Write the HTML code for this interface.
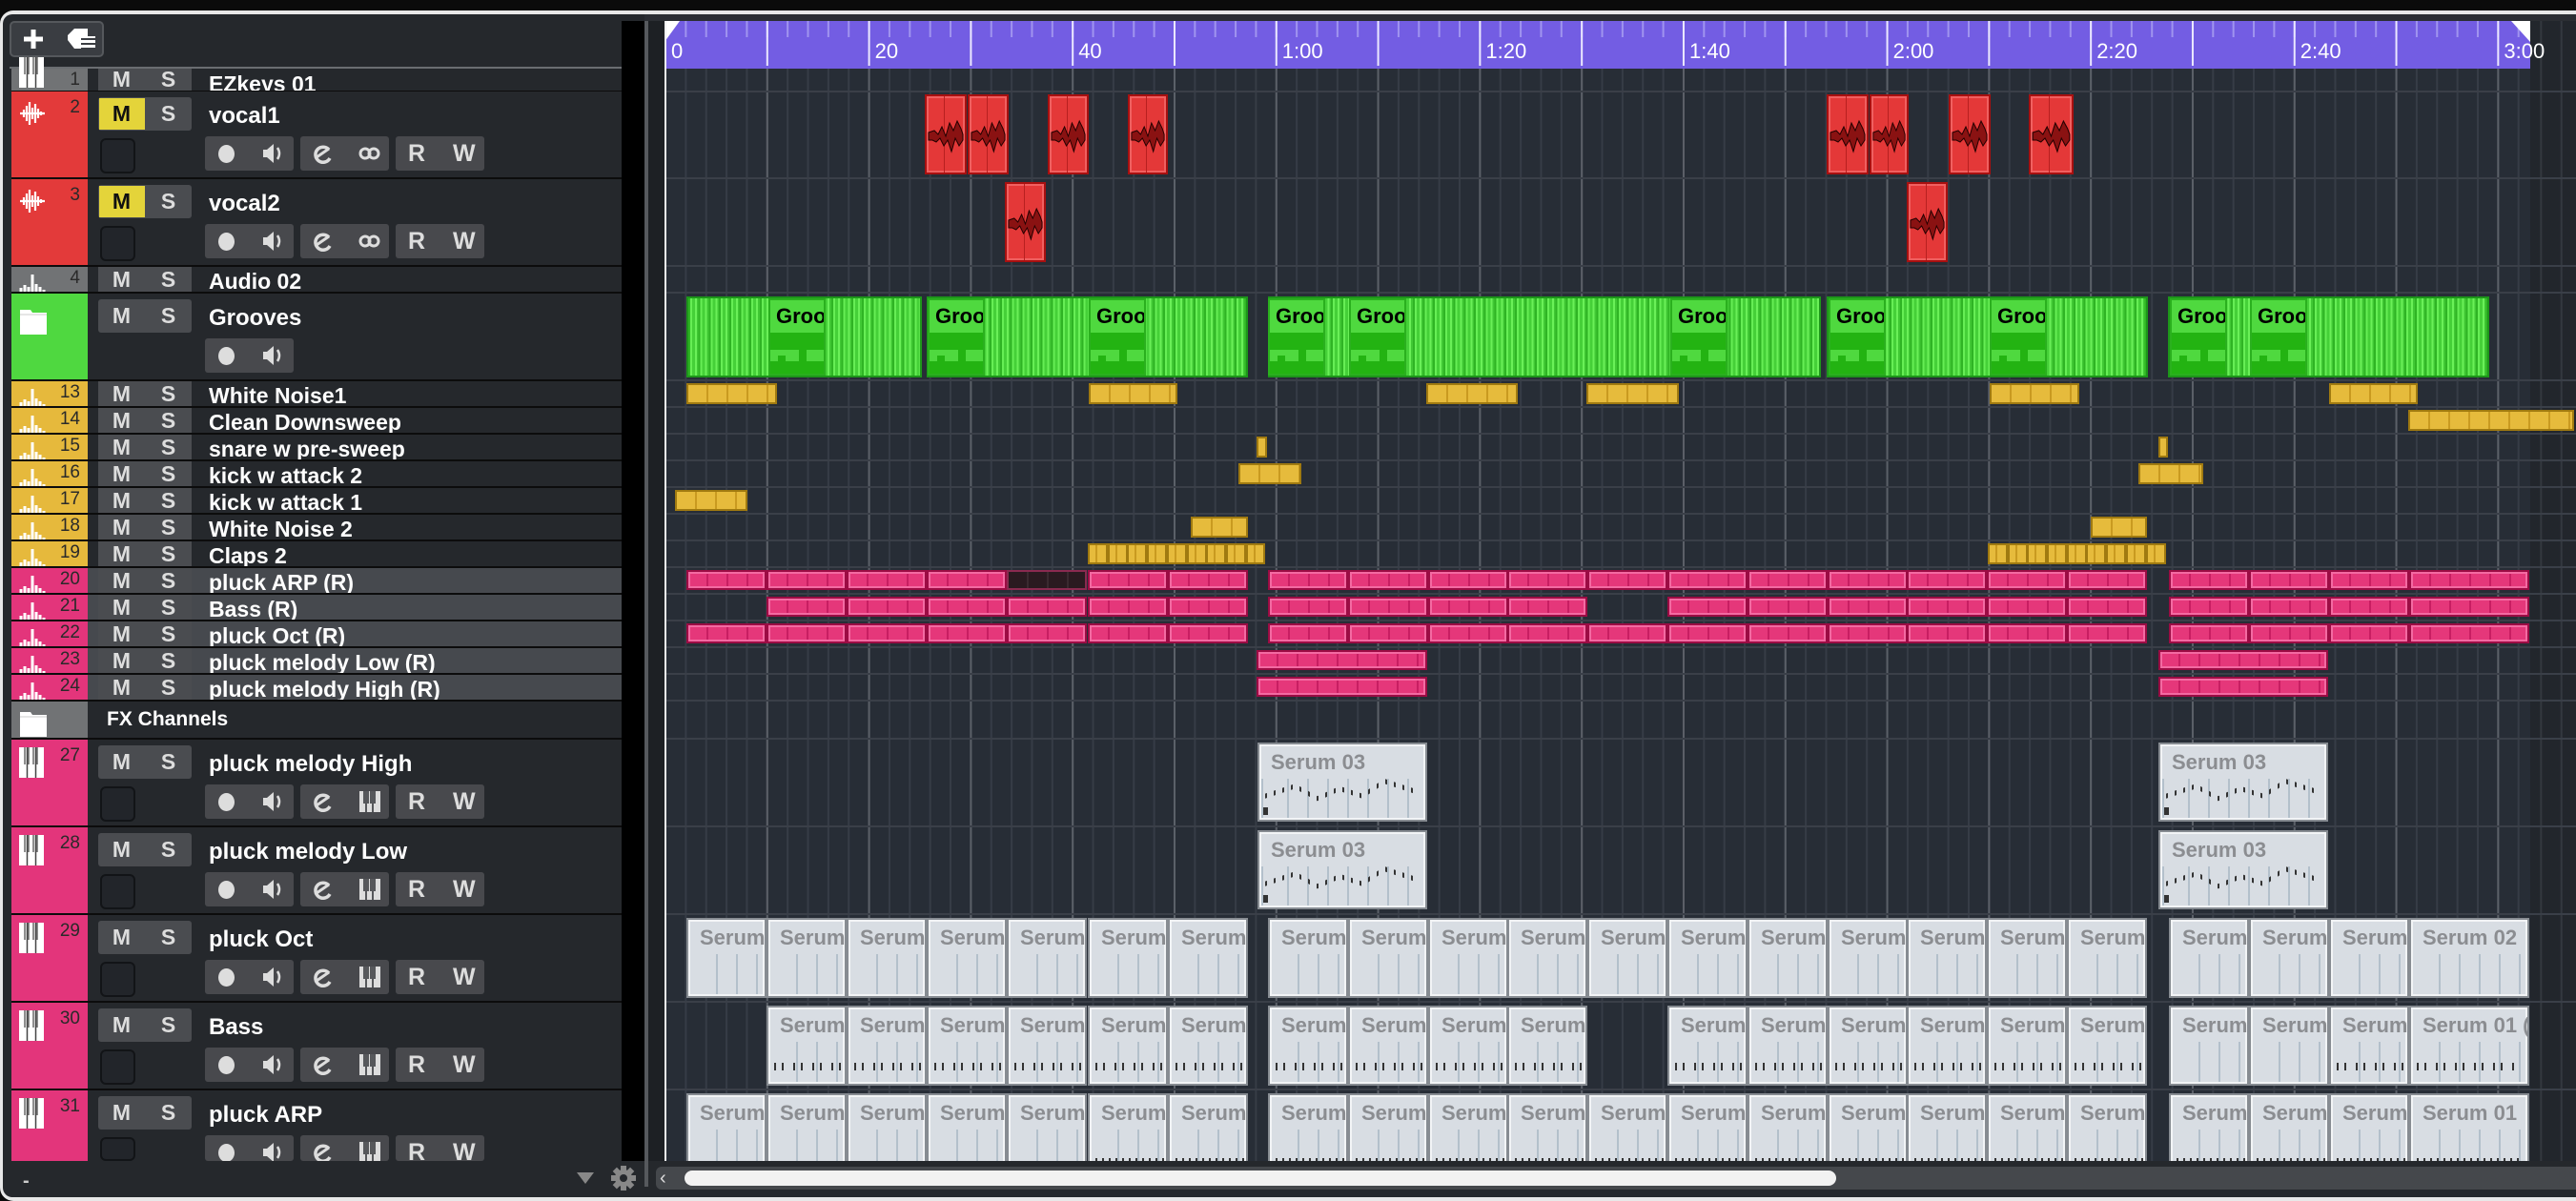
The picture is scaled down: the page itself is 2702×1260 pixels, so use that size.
<!DOCTYPE html>
<html><head><meta charset="utf-8"><style>
body{margin:0;width:2702px;height:1260px;overflow:hidden;background:#0b0b0b;position:relative;font-family:"Liberation Sans",sans-serif}
div{box-sizing:border-box}
</style></head><body>
<script>
const B=document.body;
function d(x,y,w,h,st,html){const e=document.createElement('div');e.style.cssText=`position:absolute;left:${x}px;top:${y}px;width:${w}px;height:${h}px;`+(st||'');if(html!==undefined)e.innerHTML=html;B.appendChild(e);return e;}
// frame
d(0,11,2702,1249,'background:#e8e8e8;border-radius:14px 0 0 14px');
d(3,15,2699,1241,'background:#25282c;border-radius:10px 0 0 10px');
d(676,15,2026,7,'background:#2b2e33');
// toolbar button
d(10,22,99,38,'background:#3a3d42;border:2px solid #55585c;border-radius:5px');
d(23,24,24,34,'','<svg width="24" height="34"><path d="M12 7v20M2 17h20" stroke="#fff" stroke-width="5"/></svg>');
d(68,28,36,26,'','<svg width="36" height="26"><path d="M10 2h14v8h8v13H10L3 14V9z" fill="#fff"/><path d="M17 13h15M17 18h15M17 23h15" stroke="#3a3d42" stroke-width="2"/></svg>');
d(10,70,642,2,'background:#6a6d71');
// left panel black bg
d(12,72,640,1146,'background:#0c0c0c');
d(652,22,24,1196,'background:#000');
d(676,22,4,1223,'background:#56595d');
d(680,22,17,1196,'background:#1d2024');
const IC={
wave:'<svg width="30" height="30"><path d="M2 15h26M6 11v8M9 7v16M12 3v24M15 9v12M18 5v20M21 10v10M24 13v4" stroke="#fff" stroke-width="2.2"/></svg>',
bars:'<svg width="30" height="20"><path d="M3 20v-4M7 20v-7M11 20v-5M15 20V2M19 20v-8M23 20v-5M27 20v-2" stroke="#fff" stroke-width="3"/></svg>',
keys:'<svg width="26" height="32"><rect x="0" y="0" width="26" height="32" fill="#fff"/><path d="M8.5 0v32M17.5 0v32" stroke="#444" stroke-width="1.5"/><path d="M6 0v18M10 0v18M15 0v18M19 0v18" stroke="#444" stroke-width="1.2"/></svg>',
folder:'<svg width="30" height="30"><path d="M1 3h11l2 3h15v23H1z" fill="#fff"/><path d="M1 8h28" stroke="#ccc" stroke-width="1"/></svg>'};
const SPK='<svg width="26" height="26"><path d="M3 9h4l7-6v20l-7-6H3z" fill="#ddd"/><path d="M18 7q4 6 0 12" stroke="#ddd" stroke-width="2.5" fill="none"/></svg>';
const EDT='<svg width="26" height="26"><path d="M20 9a8 8 0 1 0 1 9" stroke="#ddd" stroke-width="3.5" fill="none"/><path d="M7 17L20 8" stroke="#ddd" stroke-width="3"/></svg>';
const LNK='<svg width="26" height="26"><circle cx="8" cy="13" r="5" stroke="#ddd" stroke-width="3" fill="none"/><circle cx="17" cy="13" r="5" stroke="#ddd" stroke-width="3" fill="none"/></svg>';
const KEY='<svg width="26" height="26"><rect x="2" y="2" width="22" height="22" fill="#ddd"/><path d="M9 2v22M16 2v22M7 2v13M11 2v13M14 2v13M18 2v13" stroke="#48494d" stroke-width="1.8"/></svg>';
function row(y,h,col,num,name,kind,icon,o){o=o||{};
 d(12,y,640,h,'background:'+(o.bg||'#25282c'));
 d(12,y,80,h,'background:'+col);
 if(num)d(36,y+(kind=='b'?6:1),48,22,'text-align:right;color:#2a2a2a;font-size:19px;line-height:22px',num);
 if(icon=='wave')d(19,y+8,30,30,'',IC.wave);
 if(icon=='bars')d(19,y+h-20,30,20,'',IC.bars);
 if(icon=='keys')d(20,y+(kind=='b'?8:-12),26,kind=='b'?32:35,'overflow:hidden',IC.keys);
 if(icon=='folder')d(20,y+(kind=='fx'?8:14),30,30,'',IC.folder);
 if(kind=='fx'){d(112,y,400,h,'color:#fff;font-weight:bold;font-size:21px;line-height:'+h+'px','FX Channels');return;}
 let my=kind=='b'?y+6:y, mh=kind=='b'?35:h;
 d(103,my,98,mh,'background:#4a4c50;border-radius:'+(kind=='b'?'3px':'0'));
 if(o.m)d(104,my+1,48,mh-2,'background:#e4d43a');
 d(103,my,49,mh,'text-align:center;font-weight:bold;font-size:23px;line-height:'+mh+'px;color:'+(o.m?'#111':'#ddd'),'M');
 d(152,my,49,mh,'text-align:center;font-weight:bold;font-size:23px;line-height:'+mh+'px;color:#ddd','S');
 if(kind=='b'){
  d(219,y+8,420,35,'color:#fff;font-weight:bold;font-size:24px;line-height:35px',name);
  if(!o.g1only)d(105,y+49,37,Math.min(37,h-49),'border:2px solid #121417;border-radius:6px;background:#22252a');
  const by=y+47,bh=Math.min(36,h-47);
  const g=(x,html)=>{d(x,by,93,bh,'background:#48494d;border-radius:3px;overflow:hidden',html)};
  g(215,'<div style="position:absolute;left:14px;top:9px;width:17px;height:19px;border-radius:50%;background:#ddd"></div><div style="position:absolute;left:58px;top:5px">'+SPK+'</div>');
  if(!o.g1only){
   g(315,'<div style="position:absolute;left:10px;top:5px">'+EDT+'</div><div style="position:absolute;left:60px;top:5px">'+(o.g2=='link'?LNK:KEY)+'</div>');
   g(415,'<div style="position:absolute;left:13px;top:0;font-weight:bold;font-size:25px;line-height:36px;color:#ddd">R</div><div style="position:absolute;left:60px;top:0;font-weight:bold;font-size:25px;line-height:36px;color:#ddd">W</div>');
  }
 } else {
  d(219,y,420,h,'color:#fff;font-weight:bold;font-size:23px;overflow:hidden;line-height:'+(h+(h<25?10:4))+'px',name);
 }
}
const GR='#717375',RD='#e33a3a',GN='#4fd840',YL='#e6b93c',PK='#e3357b';
row(72,23,GR,'1','EZkeys 01','s','keys');
row(96,90,RD,'2','vocal1','b','wave',{m:1,g2:'link'});
row(188,90,RD,'3','vocal2','b','wave',{m:1,g2:'link'});
row(280,26,GR,'4','Audio 02','s','bars');
row(308,90,GN,'','Grooves','b','folder',{g1only:1});
const yn=['White Noise1','Clean Downsweep','snare w pre-sweep','kick w attack 2','kick w attack 1','White Noise 2','Claps 2'];
yn.forEach((n,i)=>row(400+28*i,26,YL,String(13+i),n,'s','bars'));
const pn=['pluck ARP (R)','Bass (R)','pluck Oct (R)','pluck melody Low (R)','pluck melody High (R)'];
pn.forEach((n,i)=>row(596+28*i,26,PK,String(20+i),n,'s','bars',{bg:'#46494e'}));
row(736,38,GR,'','FX Channels','fx','folder');
const kn=['pluck melody High','pluck melody Low','pluck Oct','Bass','pluck ARP'];
kn.forEach((n,i)=>row(776+92*i,i==4?74:90,PK,String(27+i),n,'b','keys',{g2:'keys'}));
d(12,1218,640,38,'background:#25282c');
d(24,1228,20,20,'color:#ccc;font-size:20px;font-weight:bold','-');
d(603,1228,22,20,'','<svg width="22" height="16"><path d="M2 2h18L11 14z" fill="#888"/></svg>');
d(640,1222,28,28,'','<svg width="28" height="28"><g fill="#888"><circle cx="14" cy="14" r="9"/><rect x="11" y="1" width="6" height="26"/><rect x="1" y="11" width="26" height="6"/><rect x="11" y="1" width="6" height="26" transform="rotate(45 14 14)"/><rect x="11" y="1" width="6" height="26" transform="rotate(-45 14 14)"/></g><circle cx="14" cy="14" r="4" fill="#25282c"/></svg>');
// track area
const X0=697;
d(697,72,1957,1146,'background-color:#272d36;background-image:linear-gradient(90deg,#5b6068 0 2px,transparent 2px),linear-gradient(90deg,#363c46 0 2px,transparent 2px);background-size:106.8px 100%,21.36px 100%');
d(2654,22,48,1196,'background-color:#22262c;background-image:linear-gradient(90deg,#33383f 0 2px,transparent 2px);background-size:21.36px 100%;background-position:-11px 0');
const rb=[95,186,278,306,398];for(let i=0;i<12;i++)rb.push(426+28*i);rb.push(774);for(let i=0;i<5;i++)rb.push(866+92*i);
rb.forEach(y=>d(697,y,2005,2,'background:#3a3f48'));
d(697,22,1957,50,'background-color:#735de3;background-image:linear-gradient(90deg,#ebe8ff 0 2px,transparent 2px),linear-gradient(90deg,#a094ef 0 2px,transparent 2px);background-size:106.8px 47px,21.36px 17px;background-repeat:repeat-x');
['0','20','40','1:00','1:20','1:40','2:00','2:20','2:40','3:00'].forEach((l,i)=>d(X0+i*213.6+7,22,80,50,'color:#fff;font-size:22px;line-height:64px',l));
d(697,22,16,22,'','<svg width="16" height="22"><path d="M0 0h16L0 22z" fill="#fff"/></svg>');
d(2634,22,20,22,'','<svg width="20" height="22"><path d="M0 0h20v22z" fill="#fff"/></svg>');
function clip(x1,x2,y1,y2,st,html){return d(Math.round(x1),y1,Math.round(x2-x1),y2-y1,st,html);}
const WV='<svg width="100%" height="40" viewBox="0 0 40 40" preserveAspectRatio="none" style="position:absolute;left:0;top:22px"><path d="M2 16 L8 14 12 18 16 10 20 20 24 6 28 14 32 4 36 12 38 18 38 24 34 30 30 22 26 36 22 24 18 30 14 22 10 26 6 24 2 24z" fill="#8a1212" stroke="#200" stroke-width="1"/></svg>';
function red(x1,x2,y){clip(x1,x2,y,y+84,'background:#e43838;border:2px solid #a81010;box-shadow:inset 0 0 0 2px #f06060;overflow:hidden','<div style="position:absolute;left:45%;top:0;width:1px;height:100%;background:#b82020"></div>'+WV);}
[[970,1014],[1015,1058],[1099,1142],[1183,1225],[1916,1960],[1961,2002],[2044,2088],[2128,2175]].forEach(a=>red(a[0],a[1],99));
[[1054,1097],[2000,2043]].forEach(a=>red(a[0],a[1],191));
function groove(x1,x2){clip(x1,x2,311,396,'background-color:#50dc42;border:2px solid #1d961a;background-image:repeating-linear-gradient(90deg,#2fb424 0 2px,#66ee55 2px 4px,#45d038 4px 7px,#6af058 7px 9px,#40c834 9px 10.7px);');}
[[720,967],[972,1309],[1330,1910],[1916,2253],[2274,2611]].forEach(a=>groove(a[0],a[1]));
[806,973,1142,1330,1415,1752,1918,2087,2276,2360].forEach(x=>d(x,313,60,81,'background:#4fd93f;border:2px solid #2ab01e;overflow:hidden','<div style="position:absolute;left:0;top:34px;width:100%;height:18px;background:#23b312"></div><div style="position:absolute;left:0;top:64px;width:100%;height:14px;background:#23b312"></div><div style="position:absolute;left:8px;top:58px;width:8px;height:8px;background:#23b312"></div><div style="position:absolute;left:30px;top:52px;width:8px;height:12px;background:#23b312"></div><div style="position:absolute;left:6px;top:4px;color:#000;font-weight:bold;font-size:22px">Groo</div>'));
function yel(x1,x2,r,seg){const y=400+28*r;
 if(seg){for(let x=x1;x<x2-2;x+=20.7)clip(x,Math.min(x+20.7,x2),y+2,y+24,'background:#e6bb3c;border:2px solid #a07a10;background-image:linear-gradient(90deg,transparent 6px,#c99a20 6px 8px,transparent 8px)');return;}
 clip(x1,x2,y+2,y+24,'background-color:#e6bb3c;border:2px solid #a07a10;background-image:repeating-linear-gradient(90deg,transparent 0 19px,#c99a20 19px 21px)');}
[[720,815],[1142,1235],[1496,1592],[1664,1761],[2087,2181],[2443,2536]].forEach(a=>yel(a[0],a[1],0));
yel(2526,2700,1);
yel(1318,1329,2);yel(2264,2274,2);
yel(1299,1365,3);yel(2243,2311,3);
yel(708,784,4);
yel(1249,1309,5);yel(2193,2252,5);
yel(1141,1327,6,1);yel(2085,2273,6,1);
const A=[],Bs=[],C=[];
for(let i=0;i<7;i++)A.push([720+84.1*i,720+84.1*(i+1)]);
for(let j=0;j<11;j++)Bs.push([1330+83.8*j,1330+83.8*(j+1)]);
C.push([2275,2359],[2359,2443],[2443,2527],[2527,2653]);
function pink(a,y,dark){clip(a[0],a[1],y+2,y+23,(dark?'background-color:#2a1a20;border:2px solid #8a2a50;':'background-color:#e5377a;border:2px solid #9c0c44;box-shadow:inset 0 0 0 2px #f36aa2;')+'background-image:repeating-linear-gradient(90deg,transparent 0 19px,'+(dark?'#3a2a30':'#c81e62')+' 19px 21px)');}
[0,2].forEach(r=>{const y=596+28*r;A.forEach((a,i)=>pink(a,y,r==0&&i==4));Bs.forEach(a=>pink(a,y));C.forEach(a=>pink(a,y));});
{const y=624;A.slice(1).forEach(a=>pink(a,y));Bs.slice(0,4).forEach(a=>pink(a,y));Bs.slice(5).forEach(a=>pink(a,y));C.forEach(a=>pink(a,y));}
[680,708].forEach(y=>{pink([1318,1497],y);pink([2264,2442],y);});
function notes(kind){
 if(kind=='mel')return '<div style="position:absolute;left:6px;top:36px;width:90%;height:26px;background-image:repeating-linear-gradient(90deg,#333 0 2px,transparent 2px 9px);clip-path:polygon(0 60%,20% 20%,35% 70%,50% 30%,65% 60%,80% 0,100% 40%,100% 60%,80% 20%,65% 80%,50% 50%,35% 90%,20% 40%,0 80%)"></div><div style="position:absolute;left:4px;top:66px;width:5px;height:8px;background:#333"></div>';
 if(kind=='bass')return '<div style="position:absolute;left:6px;top:58px;width:88%;height:8px;background-image:repeating-linear-gradient(90deg,#333 0 2px,transparent 2px 8px,#333 8px 10px,transparent 10px 20px)"></div>';
 if(kind=='arpA')return '<div style="position:absolute;left:18px;top:74px;width:60px;height:14px;background-image:repeating-linear-gradient(90deg,#333 0 2px,transparent 2px 22px)"></div>';
 if(kind=='arpB')return '<div style="position:absolute;left:6px;top:66px;width:90%;height:10px;background-image:repeating-linear-gradient(90deg,#333 0 2px,transparent 2px 7px)"></div><div style="position:absolute;left:10px;top:82px;width:85%;height:9px;background-image:repeating-linear-gradient(90deg,#333 0 2px,transparent 2px 11px)"></div>';
 return '';}
function serum(a,y,h,label,nk){clip(a[0],a[1],y,y+h,'background-color:#d8dde3;border:2px solid #878c92;box-shadow:inset 0 0 0 2px #f2f4f6;overflow:hidden;background-image:linear-gradient(180deg,#d8dde3 0 36px,transparent 36px),repeating-linear-gradient(90deg,transparent 0 19px,#b3c0cb 19px 21px);background-position:0 0,10px 0','<div style="position:absolute;left:12px;top:6px;color:#8b8d91;font-weight:bold;font-size:22px;white-space:nowrap">'+label+'</div>'+notes(nk));}
[776,868].forEach(y=>{serum([1319,1497],y+3,83,'Serum 03','mel');serum([2264,2442],y+3,83,'Serum 03','mel');});
{const y=963;A.forEach(a=>serum(a,y,84,'Serum'));Bs.forEach(a=>serum(a,y,84,'Serum'));C.forEach((a,i)=>serum(a,y,84,i==3?'Serum 02':'Serum'));}
{const y=1055;A.slice(1).forEach(a=>serum(a,y,84,'Serum','bass'));Bs.slice(0,4).forEach(a=>serum(a,y,84,'Serum','bass'));Bs.slice(5).forEach(a=>serum(a,y,84,'Serum','bass'));C.forEach((a,i)=>serum(a,y,84,i==3?'Serum 01 (R)':'Serum',i>=2?'bass':''));}
{const y=1147;A.forEach((a,i)=>serum(a,y,90,'Serum',i<5?'arpA':'arpB'));Bs.forEach(a=>serum(a,y,90,'Serum','arpB'));C.forEach((a,i)=>serum(a,y,90,i==3?'Serum 01':'Serum','arpB'));}
d(697,22,2,1196,'background:#f0f0f0');
d(680,1218,2022,38,'background:#25282c');
d(688,1224,2014,24,'background:#45484c;border-radius:6px 0 0 6px');
d(692,1226,20,20,'color:#ddd;font-size:20px;line-height:20px','&#8249;');
d(718,1228,1208,16,'background:#f2f2f2;border-radius:8px');
</script>
</body></html>
